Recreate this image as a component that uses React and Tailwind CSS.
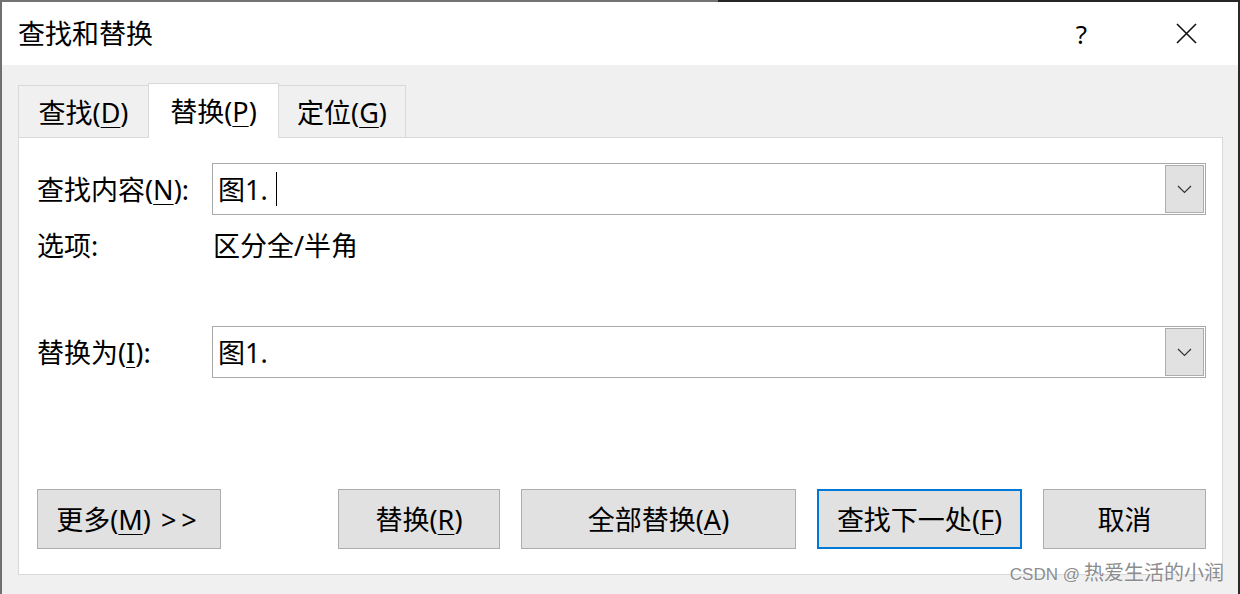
import React from 'react';

const ui = { fontFamily: '"Noto Sans", "Noto Sans CJK SC", sans-serif' };

// little helper for the access-key underline, e.g. (D)
const Key = ({ k }) => (
  <>
    (<span className="underline decoration-1 underline-offset-[4px]">{k}</span>)
  </>
);

const Chevron = () => (
  <svg width="15" height="9" viewBox="0 0 15 9" fill="none">
    <polyline points="1,1 7.5,7.5 14,1" stroke="#333" strokeWidth="1.2" />
  </svg>
);

const Combo = ({ value, caret }) => (
  <div className="flex-1 h-[52px] flex border border-[#a9a9a9] bg-white p-px">
    <div className="flex-1 flex items-center pl-[4px] text-[27px] leading-none text-black">
      <span>{value}</span>
      {caret && <span className="ml-[8px] w-px h-[34px] bg-black" />}
    </div>
    <div className="w-[39px] flex items-center justify-center border border-[#adadad] bg-[#e1e1e1]">
      <Chevron />
    </div>
  </div>
);

const Button = ({ w, focus, children }) => (
  <button
    className={
      focus
        ? 'h-[60px] flex items-center justify-center border-2 border-[#0078d7] bg-[#e1e1e1] text-[27px] leading-none text-black'
        : 'h-[60px] flex items-center justify-center border border-[#adadad] bg-[#e1e1e1] text-[27px] leading-none text-black'
    }
    style={{ width: w }}
  >
    {children}
  </button>
);

export default function App() {
  return (
    <div className="relative w-[1240px] h-[594px] overflow-hidden flex flex-col bg-[#f0f0f0]" style={ui}>
      {/* desktop strip behind the window */}
      <div className="h-[2px] flex">
        <div className="w-[718px] bg-[#737373]" />
        <div className="flex-1 bg-[#262626]" />
      </div>

      <div className="flex-1 flex">
        <div className="flex-1 flex flex-col border-l-2 border-l-[#707070]">
          {/* Title bar */}
          <div className="h-[63px] bg-white flex items-center">
            <div className="flex-1 pl-[16px] text-[27px] leading-none text-black">查找和替换</div>
            <div className="w-[105px] h-full flex items-center justify-center text-[26px] leading-none text-black">?</div>
            <div className="w-[104px] h-full flex items-center justify-center">
              <svg width="21" height="21" viewBox="0 0 21 21">
                <path d="M1 1 L20 20 M20 1 L1 20" stroke="#111" strokeWidth="1.6" />
              </svg>
            </div>
          </div>

          {/* Body */}
          <div className="flex-1 flex flex-col pt-[18px] pl-[16px] pr-[15px] pb-[19px]">
            {/* Tabs */}
            <div className="h-[55px] flex items-end">
              <div className="w-[130px] h-[53px] flex items-center justify-center border-l border-t border-[#d9d9d9] text-[27px] leading-none text-black">
                查找<Key k="D" />
              </div>
              <div className="relative z-10 w-[131px] h-[55px] flex items-center justify-center border-x border-t border-[#d9d9d9] bg-white text-[27px] leading-none text-black">
                替换<Key k="P" />
              </div>
              <div className="w-[127px] h-[53px] flex items-center justify-center border-r border-t border-[#d9d9d9] text-[27px] leading-none text-black">
                定位<Key k="G" />
              </div>
            </div>

            {/* Panel */}
            <div className="relative flex-1 -mt-px flex flex-col border border-[#d9d9d9] bg-white pt-[25px] pl-[18px] pr-[16px] pb-[25px]">
              <div className="flex items-center">
                <div className="w-[175px] text-[27px] leading-none text-black">
                  查找内容<Key k="N" />:
                </div>
                <Combo value="图1." caret />
              </div>

              <div className="mt-[15px] h-[30px] flex items-center text-[27px] leading-none text-black">
                <div className="w-[176px]">选项:</div>
                <div>区分全/半角</div>
              </div>

              <div className="mt-[66px] flex items-center">
                <div className="w-[175px] text-[27px] leading-none text-black">
                  替换为<Key k="I" />:
                </div>
                <Combo value="图1." />
              </div>

              <div className="flex-1" />

              <div className="flex items-center gap-[21px]">
                <div className="mr-auto">
                  <Button w={184}>
                    更多<Key k="M" />
                    <span className="ml-[10px] tracking-[5px]">&gt;&gt;</span>
                  </Button>
                </div>
                <Button w={162}>
                  替换<Key k="R" />
                </Button>
                <Button w={275}>
                  全部替换<Key k="A" />
                </Button>
                <Button w={205} focus>
                  查找下一处<Key k="F" />
                </Button>
                <Button w={163}>取消</Button>
              </div>
            </div>
          </div>
        </div>
        <div className="w-[2px] bg-[#2a2a2a]" />
      </div>

      {/* watermark overlay */}
      <div
        className="absolute right-[16px] bottom-[8px] flex items-baseline text-[20px] leading-[22px] text-[#8c8c8c] [text-shadow:0_0_2px_#ffffff]"
      >
        <span className="text-[17px]" style={{ fontFamily: '"Liberation Sans", sans-serif' }}>CSDN @</span>
        <span className="ml-[4px]" style={{ fontFamily: '"Noto Sans CJK SC", sans-serif' }}>热爱生活的小润</span>
      </div>
    </div>
  );
}
